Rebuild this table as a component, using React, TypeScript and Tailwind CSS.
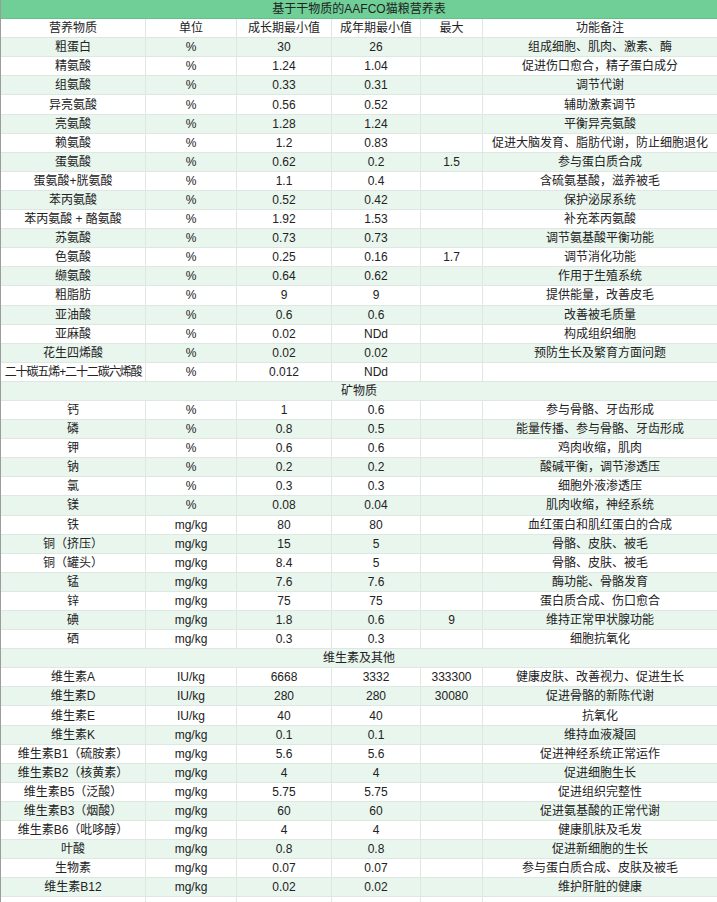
type Row = [string, string, string, string, string, string];

const nutrients: Row[] = [
  ["粗蛋白", "%", "30", "26", "", "组成细胞、肌肉、激素、酶"],
  ["精氨酸", "%", "1.24", "1.04", "", "促进伤口愈合，精子蛋白成分"],
  ["组氨酸", "%", "0.33", "0.31", "", "调节代谢"],
  ["异亮氨酸", "%", "0.56", "0.52", "", "辅助激素调节"],
  ["亮氨酸", "%", "1.28", "1.24", "", "平衡异亮氨酸"],
  ["赖氨酸", "%", "1.2", "0.83", "", "促进大脑发育、脂肪代谢，防止细胞退化"],
  ["蛋氨酸", "%", "0.62", "0.2", "1.5", "参与蛋白质合成"],
  ["蛋氨酸+胱氨酸", "%", "1.1", "0.4", "", "含硫氨基酸，滋养被毛"],
  ["苯丙氨酸", "%", "0.52", "0.42", "", "保护泌尿系统"],
  ["苯丙氨酸 + 酪氨酸", "%", "1.92", "1.53", "", "补充苯丙氨酸"],
  ["苏氨酸", "%", "0.73", "0.73", "", "调节氨基酸平衡功能"],
  ["色氨酸", "%", "0.25", "0.16", "1.7", "调节消化功能"],
  ["缬氨酸", "%", "0.64", "0.62", "", "作用于生殖系统"],
  ["粗脂肪", "%", "9", "9", "", "提供能量，改善皮毛"],
  ["亚油酸", "%", "0.6", "0.6", "", "改善被毛质量"],
  ["亚麻酸", "%", "0.02", "NDd", "", "构成组织细胞"],
  ["花生四烯酸", "%", "0.02", "0.02", "", "预防生长及繁育方面问题"],
  ["二十碳五烯+二十二碳六烯酸", "%", "0.012", "NDd", "", ""],
];

const minerals: Row[] = [
  ["钙", "%", "1", "0.6", "", "参与骨骼、牙齿形成"],
  ["磷", "%", "0.8", "0.5", "", "能量传播、参与骨骼、牙齿形成"],
  ["钾", "%", "0.6", "0.6", "", "鸡肉收缩，肌肉"],
  ["钠", "%", "0.2", "0.2", "", "酸碱平衡，调节渗透压"],
  ["氯", "%", "0.3", "0.3", "", "细胞外液渗透压"],
  ["镁", "%", "0.08", "0.04", "", "肌肉收缩，神经系统"],
  ["铁", "mg/kg", "80", "80", "", "血红蛋白和肌红蛋白的合成"],
  ["铜（挤压）", "mg/kg", "15", "5", "", "骨骼、皮肤、被毛"],
  ["铜（罐头）", "mg/kg", "8.4", "5", "", "骨骼、皮肤、被毛"],
  ["锰", "mg/kg", "7.6", "7.6", "", "酶功能、骨骼发育"],
  ["锌", "mg/kg", "75", "75", "", "蛋白质合成、伤口愈合"],
  ["碘", "mg/kg", "1.8", "0.6", "9", "维持正常甲状腺功能"],
  ["硒", "mg/kg", "0.3", "0.3", "", "细胞抗氧化"],
];

const vitamins: Row[] = [
  ["维生素A", "IU/kg", "6668", "3332", "333300", "健康皮肤、改善视力、促进生长"],
  ["维生素D", "IU/kg", "280", "280", "30080", "促进骨骼的新陈代谢"],
  ["维生素E", "IU/kg", "40", "40", "", "抗氧化"],
  ["维生素K", "mg/kg", "0.1", "0.1", "", "维持血液凝固"],
  ["维生素B1（硫胺素）", "mg/kg", "5.6", "5.6", "", "促进神经系统正常运作"],
  ["维生素B2（核黄素）", "mg/kg", "4", "4", "", "促进细胞生长"],
  ["维生素B5（泛酸）", "mg/kg", "5.75", "5.75", "", "促进组织完整性"],
  ["维生素B3（烟酸）", "mg/kg", "60", "60", "", "促进氨基酸的正常代谢"],
  ["维生素B6（吡哆醇）", "mg/kg", "4", "4", "", "健康肌肤及毛发"],
  ["叶酸", "mg/kg", "0.8", "0.8", "", "促进新细胞的生长"],
  ["生物素", "mg/kg", "0.07", "0.07", "", "参与蛋白质合成、皮肤及被毛"],
  ["维生素B12", "mg/kg", "0.02", "0.02", "", "维护肝脏的健康"],
];

const widths = ["w-[145px]", "w-[91px]", "w-[95px]", "w-[89px]", "w-[62px]", "flex-1"];

type Line = { kind: "head" } | { kind: "section"; title: string } | { kind: "data"; row: Row } | { kind: "blank" };

const lines: Line[] = [
  { kind: "head" },
  ...nutrients.map((row) => ({ kind: "data" as const, row })),
  { kind: "section", title: "矿物质" },
  ...minerals.map((row) => ({ kind: "data" as const, row })),
  { kind: "section", title: "维生素及其他" },
  ...vitamins.map((row) => ({ kind: "data" as const, row })),
  { kind: "blank" },
];

const headCells: Row = ["营养物质", "单位", "成长期最小值", "成年期最小值", "最大", "功能备注"];

function Cells({ cells }: { cells: Row }) {
  return (
    <>
      {cells.map((c, i) => (
        <div
          key={i}
          className={`${widths[i]} flex items-center justify-center whitespace-nowrap border-r border-[#dfe7e2] last:border-r-0 ${
            i === 0 && c.length > 12 ? "tracking-[-1.1px]" : ""
          }`}
        >
          {c}
        </div>
      ))}
    </>
  );
}

export default function App() {
  return (
    <div
      className="w-[717px] h-[902px] overflow-hidden bg-white text-[12px] text-[#222] border-l border-[#9c9c9c]"
      style={{ fontFamily: '"Liberation Sans", "Noto Sans CJK SC", sans-serif' }}
    >
      <div className="h-[19.1px] bg-[#6fcf97] flex items-center justify-center border-b border-[#62c28a]">
        基于干物质的AAFCO猫粮营养表
      </div>
      {lines.map((line, idx) => {
        const rowIndex = idx + 1;
        const bg = rowIndex % 2 === 0 ? "bg-[#e9f6ee]" : "bg-white";
        return (
          <div key={idx} className={`h-[19.1px] flex border-b border-[#dfe7e2] ${bg}`}>
            {line.kind === "head" && <Cells cells={headCells} />}
            {line.kind === "data" && <Cells cells={line.row} />}
            {line.kind === "section" && (
              <div className="flex-1 flex items-center justify-center">{line.title}</div>
            )}
            {line.kind === "blank" && <Cells cells={["", "", "", "", "", ""]} />}
          </div>
        );
      })}
    </div>
  );
}
